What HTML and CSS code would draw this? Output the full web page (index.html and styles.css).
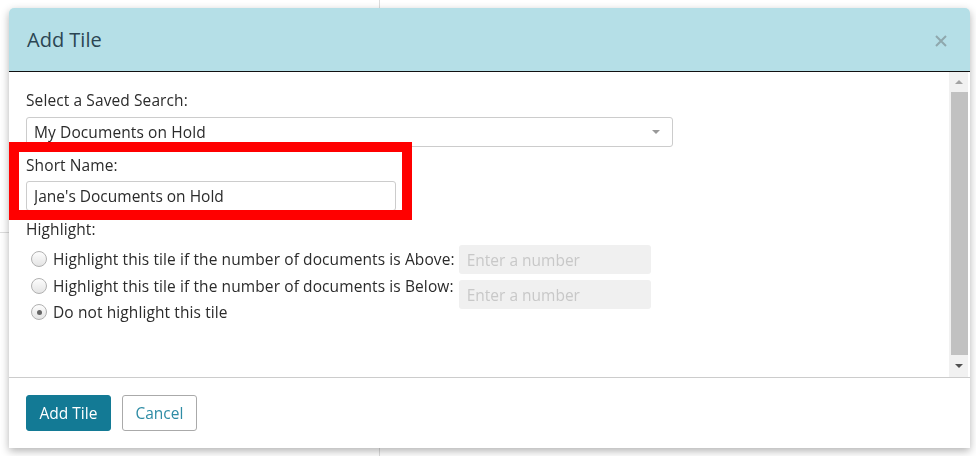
FILE: index.html
```html
<!DOCTYPE html>
<html lang="en">
<head>
    <meta charset="utf-8">
    <title>Add Tile</title>
    <link rel="stylesheet" href="styles.css">
</head>
<body>
    <!-- dashboard behind the dialog -->
    <div class="page">
        <div class="side">
            <div class="side-top"></div>
            <div class="side-rest"></div>
        </div>
        <div class="main"></div>
    </div>

    <div class="modal">
        <div class="modal-header">
            <h2 class="modal-title">Add Tile</h2>
            <button class="close-btn" aria-label="Close">
                <svg viewBox="0 0 12 12" width="12" height="12">
                    <path d="M1 1L11 11M11 1L1 11" stroke="currentColor" stroke-width="2"/>
                </svg>
            </button>
        </div>

        <div class="modal-body">
            <div class="body-content">
                <label class="field-label">Select a Saved Search:</label>
                <div class="select">
                    <span>My Documents on Hold</span>
                    <span class="caret"></span>
                </div>

                <div class="short-name">
                    <label class="field-label">Short Name:</label>
                    <input class="text-input" type="text" value="Jane's Documents on Hold">
                </div>

                <label class="field-label highlight-label">Highlight:</label>
                <div class="highlight">
                    <div class="options">
                        <label class="option"><input type="radio" name="hl"> Highlight this tile if the number of documents is Above:</label>
                        <label class="option"><input type="radio" name="hl"> Highlight this tile if the number of documents is Below:</label>
                        <label class="option"><input type="radio" name="hl" checked> Do not highlight this tile</label>
                    </div>
                    <div class="numbers">
                        <input class="number-input" type="text" placeholder="Enter a number">
                        <input class="number-input" type="text" placeholder="Enter a number">
                    </div>
                </div>
            </div>

            <!-- classic scrollbar -->
            <div class="scrollbar">
                <div class="scroll-btn up"></div>
                <div class="scroll-thumb"></div>
                <div class="scroll-btn down"></div>
            </div>
        </div>

        <div class="modal-footer">
            <button class="btn btn-primary">Add Tile</button>
            <button class="btn btn-default">Cancel</button>
        </div>

        <!-- callout around the short name field -->
        <div class="callout"></div>
    </div>
</body>
</html>
```

FILE: styles.css
```css
* {
    margin: 0;
    padding: 0;
    box-sizing: border-box;
}

body {
    font-family: "Open Sans", "Liberation Sans", sans-serif;
    font-size: 15.5px;
    letter-spacing: 0.1px;
    color: #2b2b2b;
    background: #fff;
    height: 100vh;
    overflow: hidden;
}

.page {
    display: grid;
    grid-template-columns: 380px 1fr;
    height: 100%;
}

.side {
    border-right: 1px solid #ddd;
}

.side-top {
    height: 233px;
    border-bottom: 1px solid #ddd;
}

.modal {
    position: fixed;
    left: 9px;
    top: 8px;
    width: 961px;
    height: 440px;
    background: #fff;
    border-radius: 5px 5px 0 0;
    box-shadow: 0 3px 9px rgba(0, 0, 0, 0.3);
    display: flex;
    flex-direction: column;
}

.modal-header {
    height: 64px;
    background: #b5dfe7;
    border-bottom: 1px solid #111;
    border-radius: 5px 5px 0 0;
    display: flex;
    align-items: center;
    justify-content: space-between;
    padding: 0 23px 0 18px;
}

.modal-title {
    font-size: 20px;
    font-weight: 400;
    letter-spacing: 0;
    color: #2b4553;
}

.close-btn {
    border: none;
    background: none;
    color: #8fa8ad;
    display: flex;
    margin-top: 3px;
}

.modal-body {
    height: 305px;
    display: flex;
}

.body-content {
    flex: 1;
    overflow: hidden;
    padding: 18px 17px 0;
}

.scrollbar {
    width: 19px;
    margin-right: 2px;
    background: #f1f1f1;
    display: flex;
    flex-direction: column;
}

.scroll-btn {
    display: flex;
    align-items: center;
    justify-content: center;
}

.scroll-btn.up {
    height: 20px;
}

.scroll-btn.down {
    height: 22px;
}

.scroll-btn::before {
    content: "";
    border-left: 4px solid transparent;
    border-right: 4px solid transparent;
}

.scroll-btn.up::before {
    border-bottom: 4px solid #a3a3a3;
}

.scroll-btn.down::before {
    border-top: 4px solid #505050;
}

.scroll-thumb {
    flex: 1;
    margin: 0 0 0 2px;
    background: #c1c1c1;
}

.field-label {
    display: block;
    line-height: 20px;
    margin-bottom: 7px;
}

.select {
    width: 647px;
    height: 30px;
    border: 1px solid #ccc;
    border-radius: 3px;
    padding: 0 12px 0 7px;
    display: flex;
    align-items: center;
    justify-content: space-between;
}

.caret {
    width: 0;
    height: 0;
    border-left: 4px solid transparent;
    border-right: 4px solid transparent;
    border-top: 4px solid #999;
}

.short-name {
    margin-top: 8px;
}

.short-name .field-label {
    margin-bottom: 6px;
}

.text-input {
    display: block;
    width: 370px;
    height: 30px;
    border: 1px solid #ccc;
    border-radius: 3px;
    padding: 0 7px;
    font: inherit;
    color: #2b2b2b;
}

.highlight-label {
    margin-top: 8px;
    margin-bottom: 6px;
}

.highlight {
    display: flex;
    gap: 4px;
}

.options {
    padding-left: 4px;
    padding-top: 1px;
}

.option {
    display: flex;
    align-items: center;
    height: 26.5px;
}

.option input {
    appearance: none;
    width: 16px;
    height: 16px;
    margin: 0 6px 0 1px;
    border-radius: 50%;
    border: 1px solid #b0b0b0;
    background: linear-gradient(#fdfdfd, #e4e4e4);
    display: flex;
    align-items: center;
    justify-content: center;
}

.option input:checked::after {
    content: "";
    width: 5px;
    height: 5px;
    border-radius: 50%;
    background: #666;
}

.numbers {
    display: flex;
    flex-direction: column;
    gap: 6px;
}

.number-input {
    width: 192px;
    height: 29px;
    border: none;
    border-radius: 3px;
    background: #f0f0f0;
    padding: 0 8px;
    font: inherit;
}

.number-input::placeholder {
    color: #c8c8c8;
}

.modal-footer {
    flex: 1;
    border-top: 1px solid #ccc;
    display: flex;
    align-items: flex-start;
    gap: 11px;
    padding: 17px 17px 0;
}

.btn {
    height: 36px;
    border-radius: 3px;
    font: inherit;
    padding: 0 12.5px;
}

.btn-primary {
    background: #137a95;
    border: 1px solid #137a95;
    color: #fff;
}

.btn-default {
    background: #fff;
    border: 1px solid #aaa;
    color: #2e8ca5;
}

.callout {
    position: absolute;
    left: 0;
    top: 134px;
    width: 403px;
    height: 78px;
    border: 10px solid #f00;
}
```
